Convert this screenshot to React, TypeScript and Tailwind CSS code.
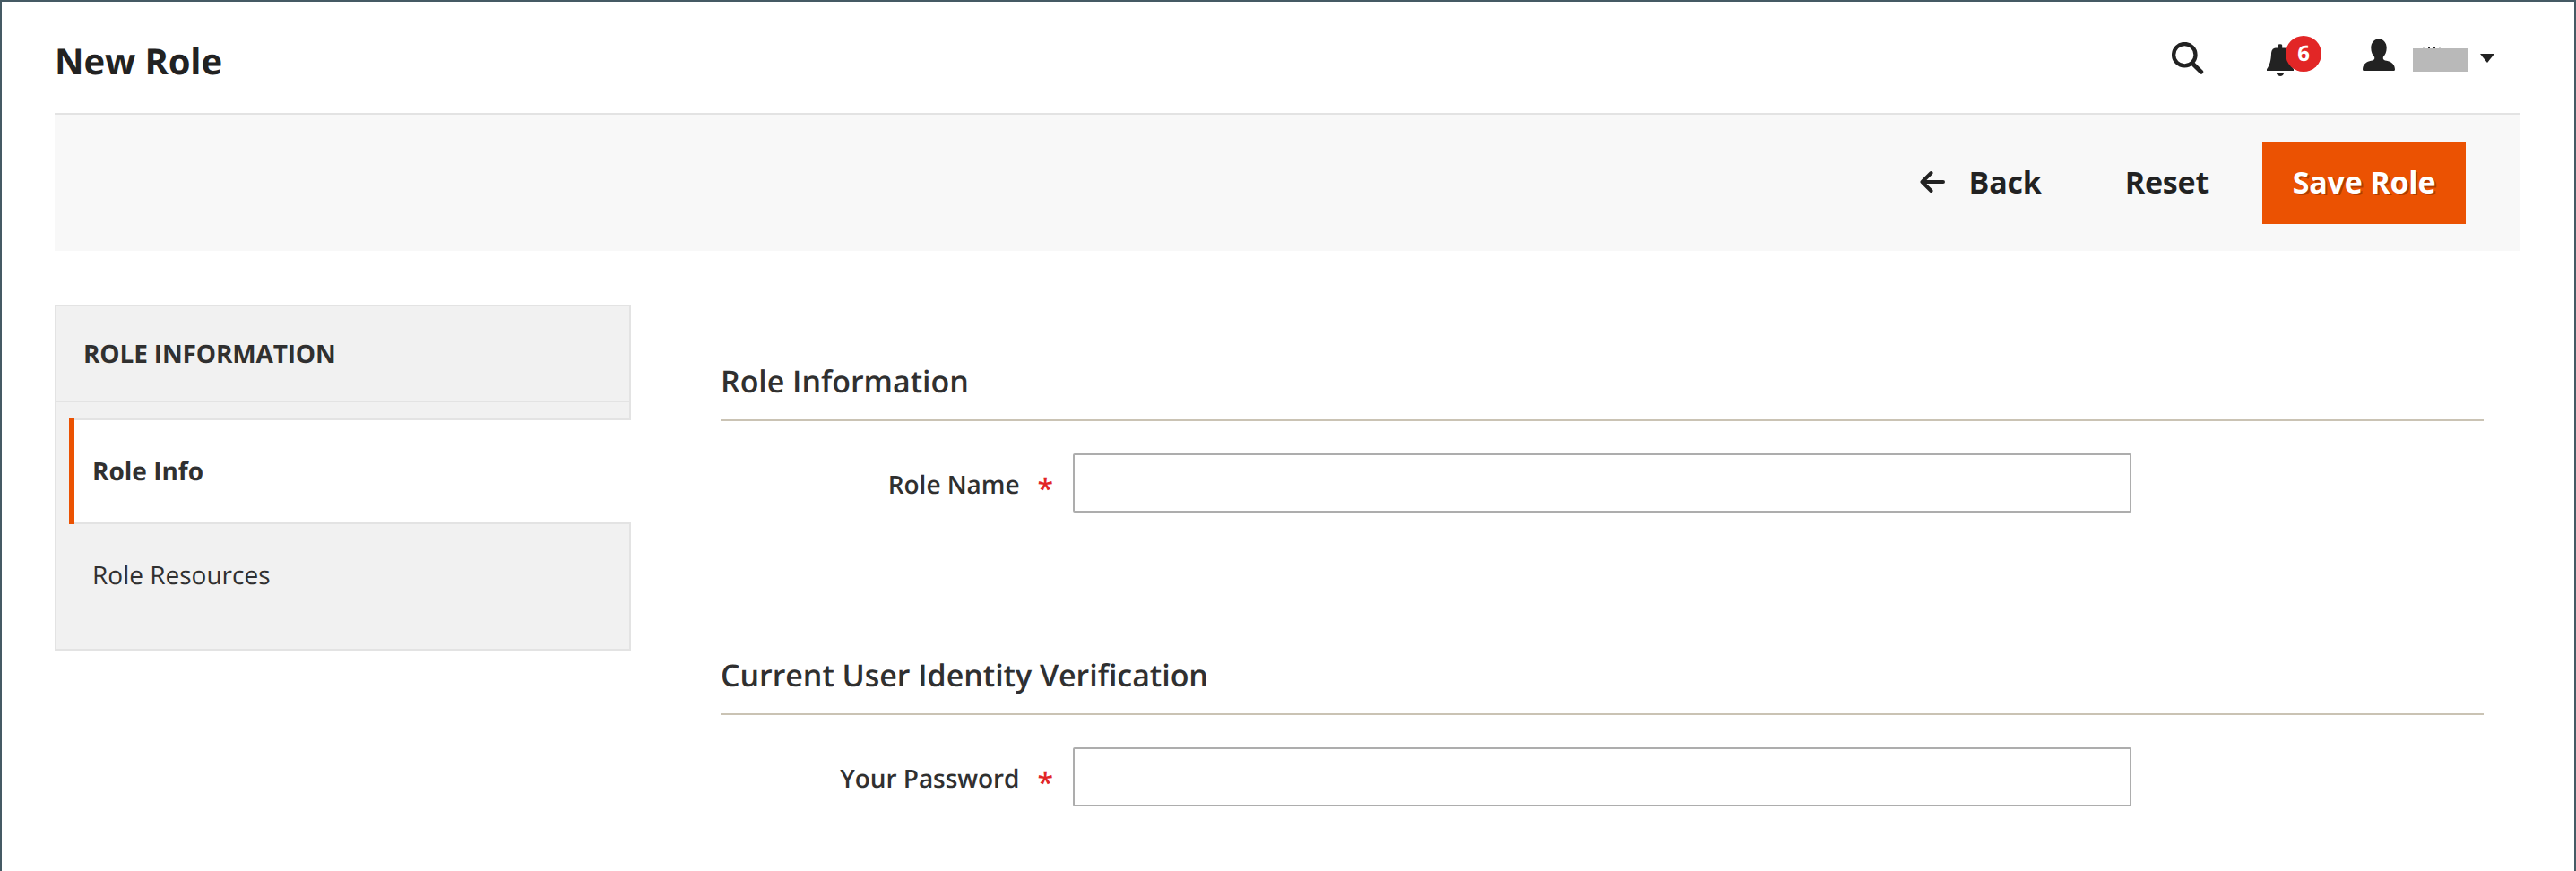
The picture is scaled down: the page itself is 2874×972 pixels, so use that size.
import React from 'react';

function SearchIcon() {
  return (
    <svg className="mt-[45px] h-9 w-9 shrink-0" viewBox="0 0 36 36" fill="none" stroke="#222222">
      <circle cx="14.3" cy="14.2" r="12.2" strokeWidth="4.3" />
      <path d="M23.600 24.200L32.800 33.300" strokeWidth="4.800" strokeLinecap="round" />
    </svg>
  );
}

function BellIcon() {
  return (
    <svg className="mt-[47px] h-9 w-[30px] shrink-0" viewBox="0 0 30 36" fill="#222222">
      <path d="M12.6 1.6Q12.6 .3 14.9 .3T17.2 1.6V4.4H20C24 4.8 24.8 7.5 25 11C25.300 18 26.500 23.500 30 28.200V30H0V28.200C3.500 23.500 4.700 18 5 11C5.200 7.500 6.200 4.800 10 4.400H12.600Z" />
      <path d="M10.500 32H19.300Q18.500 36 14.900 36T10.500 32Z" />
    </svg>
  );
}

function UserIcon() {
  return (
    <svg className="mt-[41px] h-9 w-9 shrink-0" viewBox="0 0 36 36" fill="#222222">
      <path d="M18 .4C23.500 .4 26.700 4.800 26.700 10.500C26.700 15 25 18.500 22.800 20.800V22.500C23.500 24.500 26 24.600 28.500 25.300C33 26.600 35.800 29.500 36 34.500Q36 36 34.500 36H1.500Q0 36 0 34.500C.2 29.500 3 26.600 7.500 25.300C10 24.600 12.500 24.500 13.200 22.500V20.800C11 18.500 9.300 15 9.300 10.500C9.300 4.800 12.500 .4 18 .4Z" />
    </svg>
  );
}

function Header() {
  return (
    <header className="flex h-[126px] items-start justify-between border-b-2 border-[#e3e3e3]">
      <h1 className="pt-[7px] text-[40px] leading-[117px] font-bold tracking-[-0.1px] text-[#222222]">New Role</h1>
      <div className="flex items-start pr-7">
        <SearchIcon />
        <div className="relative ml-[70px]">
          <BellIcon />
          <span className="absolute top-[38px] left-[21px] flex h-10 w-10 items-center justify-center rounded-full bg-[#e22626] pb-px text-2xl leading-none font-bold text-white">
            6
          </span>
        </div>
        <div className="ml-[77px]">
          <UserIcon />
        </div>
        <svg className="mt-[51px] ml-5 h-[27px] w-[62px]" viewBox="0 0 62 27">
          <path fill="#b9b9b9" d="M0 1H62V27H0Z" />
          <path fill="#222222" d="M17 0h2v1h-2zM23 0h2v1h-2z" />
          <path fill="#cfcfcf" d="M11 0h2v1h-2zM29 0h2v1h-2z" />
        </svg>
        <svg className="mt-[58px] ml-[13px] h-[10px] w-4" viewBox="0 0 16 10" fill="#222222">
          <path d="M0 0H16L8 10Z" />
        </svg>
      </div>
    </header>
  );
}

function ActionBar() {
  return (
    <div className="flex h-[152px] items-center justify-end bg-[#f8f8f8] pr-[60px] text-[34px] leading-none font-bold tracking-[-0.2px] text-[#222222]">
      <button className="flex h-[92px] items-center pb-[3px]">
        <svg className="mr-[27px] h-[26px] w-7" viewBox="0 0 28 26" fill="none" stroke="#222222" strokeWidth="4" strokeLinecap="round" strokeLinejoin="round">
          <path d="M26 13H3M12.500 3L2.500 13L12.500 23" />
        </svg>
        Back
      </button>
      <button className="ml-[93px] h-[92px] pb-[3px]">Reset</button>
      <button className="ml-[60px] h-[92px] w-[227px] bg-[#eb5202] pb-[3px] text-white [text-shadow:2px_2px_0_rgba(0,0,0,0.25)]">
        Save Role
      </button>
    </div>
  );
}

function Sidebar() {
  return (
    <nav className="h-[386px] w-[643px] shrink-0 bg-[#f1f1f1] text-[28px] text-[#303030]">
      <div className="h-[109px] border-2 border-[#e3e3e3] pl-[30px] leading-[106px] font-bold tracking-[-0.15px] uppercase">
        Role Information
      </div>
      <div className="h-[18px] border-x-2 border-[#e3e3e3]" />
      <div className="flex border-l-2 border-[#e3e3e3]">
        <div className="w-[14px]" />
        <div className="w-[6px] bg-[#eb5202]" />
        <a className="h-[118px] flex-1 border-y-2 border-[#e3e3e3] bg-white pl-5 leading-[115px] font-bold">
          Role Info
        </a>
      </div>
      <a className="block h-[141px] border-x-2 border-b-2 border-[#e3e3e3] pl-10 leading-[114px]">
        Role Resources
      </a>
    </nav>
  );
}

function Fieldset({ title, label, type }: { title: string; label: string; type: string }) {
  return (
    <section className="h-[328px]">
      <h2 className="h-[74px] border-b-2 border-[#cac3b4] text-[34px] leading-[58px] font-semibold tracking-[-0.05px]">{title}</h2>
      <label className="mt-9 flex h-[66px]">
        <span className="flex w-[393px] justify-end pr-[22px] text-[28px] leading-[70px] font-semibold tracking-[-0.05px]">
          {label}
          <span className="ml-5 pt-[5px] text-[32px] text-[#e22626]">*</span>
        </span>
        <input type={type} className="h-[66px] w-[1181px] rounded-[2px] border-2 border-[#adadad] bg-white px-4" />
      </label>
    </section>
  );
}

export default function App() {
  return (
    <div className="h-[972px] w-[2874px] overflow-hidden border-x-2 border-t-2 border-[#455a64] bg-white pr-[61px] pl-[59px] font-['Open_Sans','Noto_Sans',sans-serif] text-[#303030] antialiased [text-rendering:geometricPrecision]">
      <Header />
      <ActionBar />
      <div className="flex pt-[60px]">
        <Sidebar />
        <main className="ml-[100px] w-[1967px] pt-[56px]">
          <Fieldset title="Role Information" label="Role Name" type="text" />
          <Fieldset title="Current User Identity Verification" label="Your Password" type="password" />
        </main>
      </div>
    </div>
  );
}
